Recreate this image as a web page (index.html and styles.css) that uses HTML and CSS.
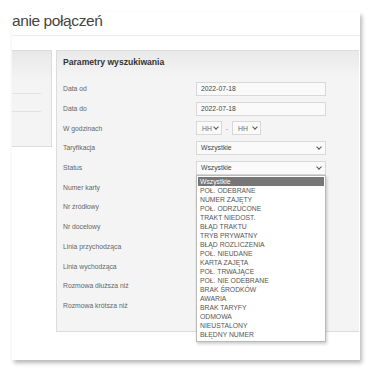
FILE: index.html
```html
<!DOCTYPE html>
<html lang="pl">
<head>
  <meta charset="UTF-8">
  <title>Wyszukiwanie połączeń</title>
  <link rel="stylesheet" href="styles.css">
</head>
<body>

  <div class="card">
    <div class="page-title">anie połączeń</div>

    <div class="content">
      <div class="side-panel">
        <div class="side-head"></div>
        <div class="side-item"></div>
        <div class="side-item"></div>
      </div>

      <div class="panel">
        <h3 class="panel-title">Parametry wyszukiwania</h3>

        <div class="form">
          <div class="row"><span class="label">Data od</span><span class="field">2022-07-18</span></div>
          <div class="row"><span class="label">Data do</span><span class="field">2022-07-18</span></div>
          <div class="row">
            <span class="label">W godzinach</span>
            <span class="hours">
              <span class="field small">HH <i class="chev"></i></span>
              <span class="dash">-</span>
              <span class="field small">HH <i class="chev"></i></span>
            </span>
          </div>
          <div class="row"><span class="label">Taryfikacja</span><span class="field select">Wszystkie <i class="chev"></i></span></div>
          <div class="row status-row">
            <span class="label">Status</span>
            <span class="field select">Wszystkie <i class="chev"></i></span>
            <ul class="dropdown">
              <li class="active">Wszystkie</li>
              <li>POŁ. ODEBRANE</li>
              <li>NUMER ZAJĘTY</li>
              <li>POŁ. ODRZUCONE</li>
              <li>TRAKT NIEDOST.</li>
              <li>BŁĄD TRAKTU</li>
              <li>TRYB PRYWATNY</li>
              <li>BŁĄD ROZLICZENIA</li>
              <li>POŁ. NIEUDANE</li>
              <li>KARTA ZAJĘTA</li>
              <li>POŁ. TRWAJĄCE</li>
              <li>POŁ. NIE ODEBRANE</li>
              <li>BRAK ŚRODKÓW</li>
              <li>AWARIA</li>
              <li>BRAK TARYFY</li>
              <li>ODMOWA</li>
              <li>NIEUSTALONY</li>
              <li>BŁĘDNY NUMER</li>
            </ul>
          </div>
          <div class="row"><span class="label">Numer karty</span><span class="field"></span></div>
          <div class="row"><span class="label">Nr źródłowy</span><span class="field"></span></div>
          <div class="row"><span class="label">Nr docelowy</span><span class="field"></span></div>
          <div class="row"><span class="label">Linia przychodząca</span><span class="field"></span></div>
          <div class="row"><span class="label">Linia wychodząca</span><span class="field"></span></div>
          <div class="row"><span class="label">Rozmowa dłuższa niż</span><span class="field"></span></div>
          <div class="row"><span class="label">Rozmowa krótsza niż</span><span class="field"></span></div>
        </div>
      </div>
    </div>
  </div>

</body>
</html>
```

FILE: styles.css
```css
* {
  box-sizing: border-box;
}

body {
  margin: 0;
  padding: 12px 10px 10px 12px;
  background: #ffffff;
  font-family: 'Liberation Sans', Arial, sans-serif;
}

.card {
  width: 348px;
  height: 348px;
  background: #ffffff;
  box-shadow: 2px 3px 4px rgba(0, 0, 0, 0.28);
  overflow: hidden;
}

.page-title {
  height: 24px;
  border-bottom: 1px solid #ececec;
  font-family: 'Liberation Sans', Arial, sans-serif;
  font-size: 15.5px;
  line-height: 17px;
  color: #444;
  letter-spacing: -0.4px;
}

.content {
  display: flex;
  gap: 4px;
  margin-top: 14px;
}

.side-panel {
  width: 40px;
  height: 97px;
  background: #f4f4f4;
  border: 1px solid #dcdcdc;
  border-left: none;
}

.side-head {
  height: 30px;
  background: linear-gradient(#e8e8e8, #f4f4f4);
}

.side-item {
  width: 29px;
  height: 18px;
  border-top: 1px solid #e2e2e2;
  margin-top: 12px;
}

.side-item + .side-item {
  margin-top: 0;
}

.panel {
  width: 303px;
  height: 282px;
  background: linear-gradient(#e9e9e9 0, #f4f4f4 26px);
  border: 1px solid #dcdcdc;
  border-right: none;
  padding: 0 0 0 6px;
}

.panel-title {
  margin: 0;
  padding-top: 6px;
  height: 24px;
  font-size: 8.6px;
  font-weight: bold;
  color: #333;
}

.form {
  padding-top: 4px;
}

.row {
  position: relative;
  display: flex;
  align-items: center;
  height: 19.7px;
}

.label {
  width: 133px;
  font-size: 6.8px;
  color: #666;
}

.field {
  display: flex;
  align-items: center;
  justify-content: space-between;
  width: 130px;
  height: 14px;
  padding: 0 4px;
  background: #fafafa;
  border: 1px solid #d8d8d8;
  font-size: 6.8px;
  color: #444;
}

.hours {
  display: flex;
  align-items: center;
}

.field.small {
  width: 26px;
  padding: 0 3px 0 5px;
  color: #666;
}

.field.small + .dash + .field.small {
  width: 29px;
}

.dash {
  width: 10px;
  text-align: center;
  font-size: 7px;
  color: #999;
}

.chev {
  width: 4px;
  height: 4px;
  border-right: 1px solid #555;
  border-bottom: 1px solid #555;
  transform: translateY(-1px) rotate(45deg);
}

.dropdown {
  position: absolute;
  left: 133px;
  top: 17px;
  width: 130px;
  margin: 0;
  padding: 1px 0 2px;
  list-style: none;
  background: #ffffff;
  border: 1px solid #b9b9b9;
  box-shadow: 1px 2px 3px rgba(0, 0, 0, 0.2);
  z-index: 2;
}

.dropdown li {
  height: 9px;
  padding: 0 3px;
  font-size: 6.8px;
  line-height: 9px;
  color: #555;
}

.dropdown li.active {
  margin: 0 1px;
  padding: 0 2px;
  background: #767676;
  color: #ffffff;
}
```
